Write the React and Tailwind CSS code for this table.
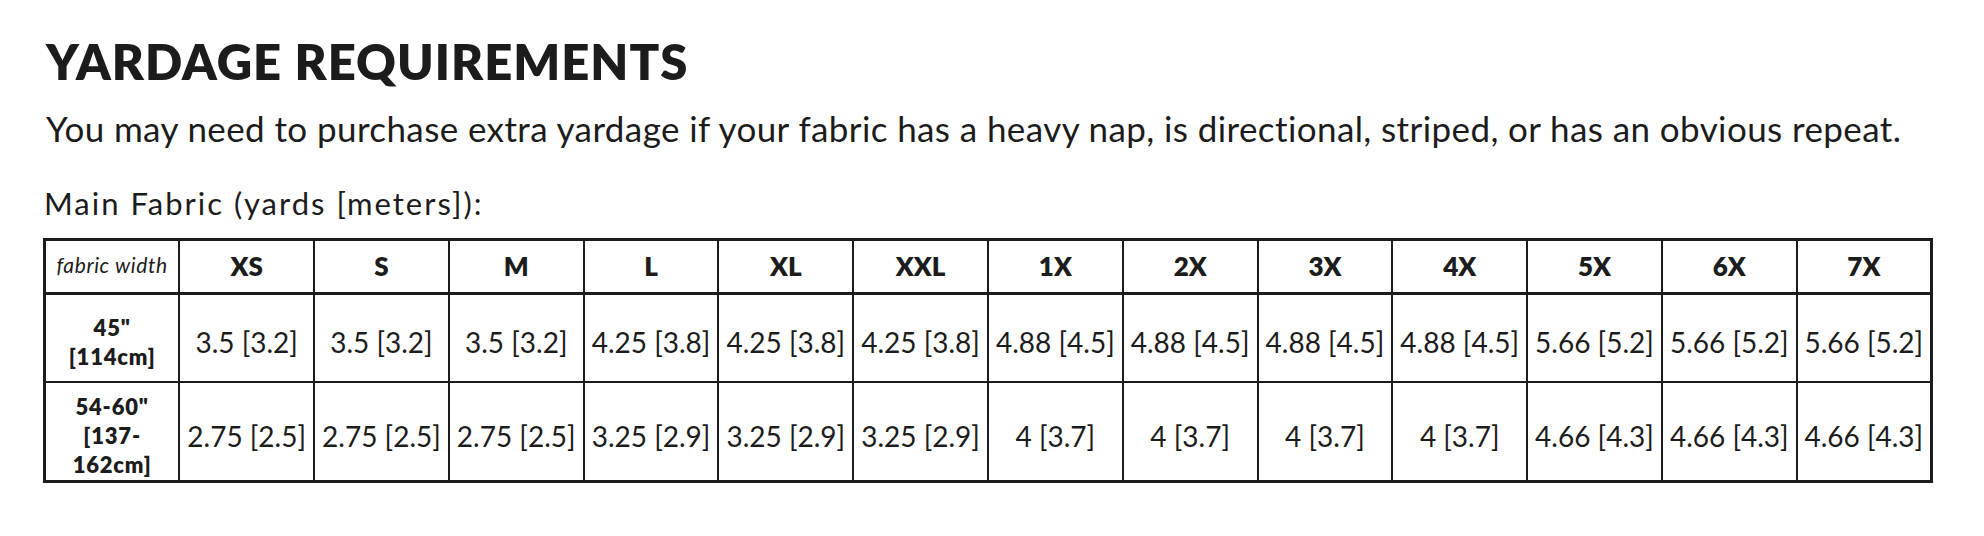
const sizes = ['XS', 'S', 'M', 'L', 'XL', 'XXL', '1X', '2X', '3X', '4X', '5X', '6X', '7X'];

const rows = [
  {
    label: ['45"', '[114cm]'],
    values: ['3.5 [3.2]', '3.5 [3.2]', '3.5 [3.2]', '4.25 [3.8]', '4.25 [3.8]', '4.25 [3.8]', '4.88 [4.5]', '4.88 [4.5]', '4.88 [4.5]', '4.88 [4.5]', '5.66 [5.2]', '5.66 [5.2]', '5.66 [5.2]'],
    height: 'h-[88px]',
  },
  {
    label: ['54-60"', '[137-', '162cm]'],
    values: ['2.75 [2.5]', '2.75 [2.5]', '2.75 [2.5]', '3.25 [2.9]', '3.25 [2.9]', '3.25 [2.9]', '4 [3.7]', '4 [3.7]', '4 [3.7]', '4 [3.7]', '4.66 [4.3]', '4.66 [4.3]', '4.66 [4.3]'],
    height: 'h-[100px]',
  },
];

export default function App() {
  return (
    <div className="min-h-screen bg-white text-[#1c1c1c] font-['Lato',sans-serif] pl-[43px] pr-[51px] pt-[35px]">
      <h1 className="pl-[3px] text-[49px] font-extrabold leading-[52px] tracking-[1px]">YARDAGE REQUIREMENTS</h1>
      <p className="pl-[3px] mt-[21px] text-[35px] leading-[40px] tracking-[0.4px]">
        You may need to purchase extra yardage if your fabric has a heavy nap, is directional, striped, or has an obvious repeat.
      </p>
      <p className="pl-[1px] mt-[38px] text-[31px] leading-[34px] tracking-[2px]">Main Fabric (yards [meters]):</p>

      <table className="mt-[18px] w-[1890px] table-fixed border-collapse border-[3px] border-[#1c1c1c]">
        <thead>
          <tr className="h-[54px]">
            <th className="border-2 border-b-[3px] border-[#1c1c1c] align-middle pb-[4px] text-[21px] leading-[26px] font-normal italic tracking-[0.6px]">
              fabric width
            </th>
            {sizes.map((s) => (
              <th key={s} className="border-2 border-b-[3px] border-[#1c1c1c] text-[26px] font-extrabold">
                {s}
              </th>
            ))}
          </tr>
        </thead>
        <tbody>
          {rows.map((row, i) => (
            <tr key={i} className={row.height}>
              <td className="border-2 border-[#1c1c1c] pt-[8px] text-center text-[22px] font-extrabold leading-[29px] tracking-[0.8px]">
                {row.label.map((l) => (
                  <div key={l}>{l}</div>
                ))}
              </td>
              {row.values.map((v, j) => (
                <td key={j} className="border-2 border-[#1c1c1c] pt-[9px] text-center text-[28px] whitespace-nowrap">
                  {v}
                </td>
              ))}
            </tr>
          ))}
        </tbody>
      </table>
    </div>
  );
}
